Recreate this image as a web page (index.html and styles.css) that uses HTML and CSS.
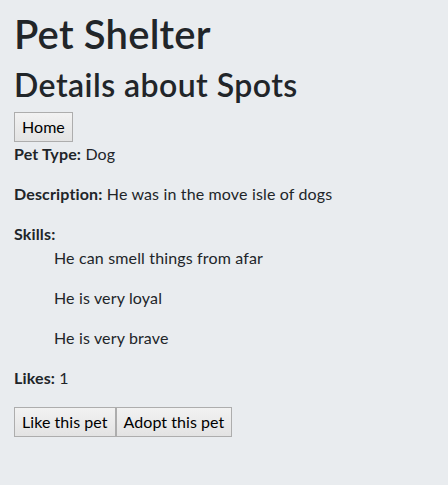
FILE: index.html
```html
<!DOCTYPE html>
<html lang="en">
<head>
<meta charset="utf-8">
<title>Pet Shelter</title>
<link rel="stylesheet" href="styles.css">
</head>
<body>
<div class="page">
  <h1 class="title">Pet Shelter</h1>
  <h2 class="subtitle">Details about Spots</h2>
  <button class="btn">Home</button>
  <p class="field"><b>Pet Type:</b> Dog</p>
  <p class="field"><b>Description:</b> He was in the move isle of dogs</p>
  <div class="field-label"><b>Skills:</b></div>
  <ul class="skills">
    <li><p class="field">He can smell things from afar</p></li>
    <li><p class="field">He is very loyal</p></li>
    <li><p class="field">He is very brave</p></li>
  </ul>
  <p class="field"><b>Likes:</b> 1</p>
  <div class="actions">
    <button class="btn">Like this pet</button><button class="btn">Adopt this pet</button>
  </div>
</div>
</body>
</html>
```

FILE: styles.css
```css
html, body {
  margin: 0;
  padding: 0;
  background: #e9ecef;
}
body {
  font-family: "Lato", "Open Sans", sans-serif;
  font-size: 16px;
  line-height: 24px;
  letter-spacing: 0.15px;
  color: #212529;
}
.page {
  padding: 10px 14px 0 14px;
}
.title {
  margin: 0 0 8px 0;
  font-size: 40px;
  line-height: 48px;
  font-weight: 600;
  letter-spacing: 0.2px;
}
.subtitle {
  margin: 0 0 8px 0;
  font-size: 32px;
  line-height: 38px;
  font-weight: 600;
  letter-spacing: 0.45px;
}
.field {
  margin: 0 0 16px 0;
}
.field-label {
  margin: 0;
}
b {
  font-weight: 700;
}
.skills {
  list-style: none;
  margin: 0 0 16px 0;
  padding: 0 0 0 40px;
}
.btn {
  display: inline-block;
  font: inherit;
  letter-spacing: 0.05px;
  color: #000;
  line-height: 24px;
  margin: 0;
  padding: 2px 7px;
  border: 1px solid #adadad;
  border-radius: 0;
  background: linear-gradient(#f2f2f2, #e3e3e3);
}
.actions {
  display: flex;
  padding-top: 1px;
}
```
